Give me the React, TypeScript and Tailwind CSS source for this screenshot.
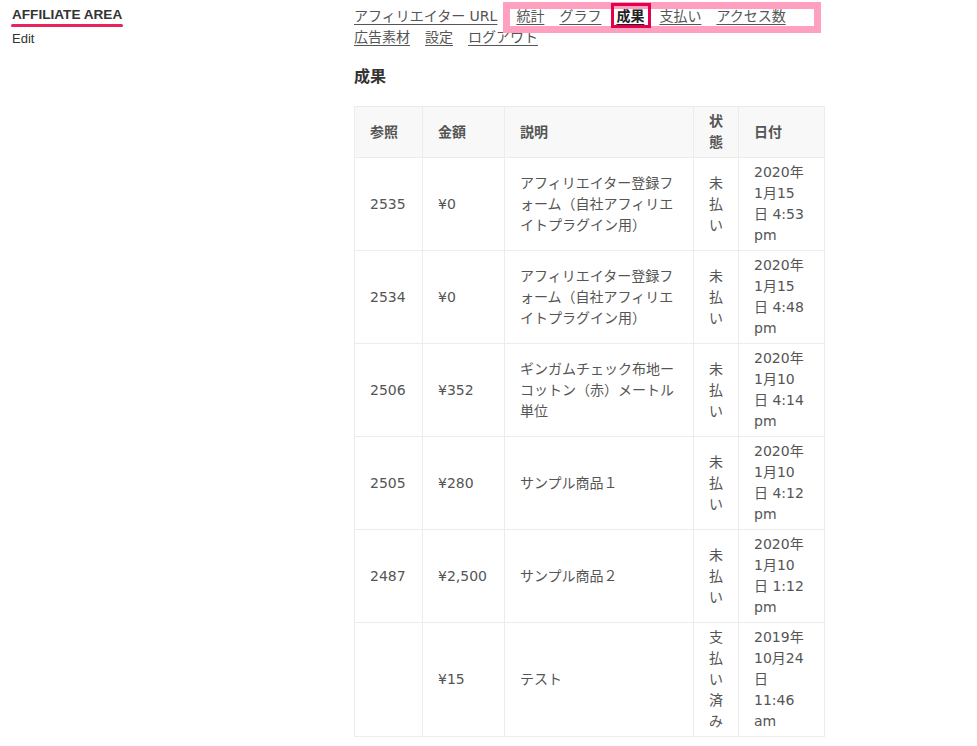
import React from "react";

type Row = {
  ref: string;
  amount: string;
  desc: string;
  status: string;
  date: string[];
};

const rows: Row[] = [
  { ref: "2535", amount: "¥0", desc: "アフィリエイター登録フォーム（自社アフィリエイトプラグイン用）", status: "未払い", date: ["2020年", "1月15", "日 4:53", "pm"] },
  { ref: "2534", amount: "¥0", desc: "アフィリエイター登録フォーム（自社アフィリエイトプラグイン用）", status: "未払い", date: ["2020年", "1月15", "日 4:48", "pm"] },
  { ref: "2506", amount: "¥352", desc: "ギンガムチェック布地ーコットン（赤）メートル単位", status: "未払い", date: ["2020年", "1月10", "日 4:14", "pm"] },
  { ref: "2505", amount: "¥280", desc: "サンプル商品１", status: "未払い", date: ["2020年", "1月10", "日 4:12", "pm"] },
  { ref: "2487", amount: "¥2,500", desc: "サンプル商品２", status: "未払い", date: ["2020年", "1月10", "日 1:12", "pm"] },
  { ref: "", amount: "¥15", desc: "テスト", status: "支払い済み", date: ["2019年", "10月24", "日", "11:46", "am"] },
];

const navLinks = ["アフィリエイター URL", "統計", "グラフ", "成果", "支払い", "アクセス数", "広告素材", "設定", "ログアウト"];

const jp = "font-['DejaVu_Sans','Noto_Sans_CJK_JP',sans-serif]";
const cell = "border border-[#ececec] px-[15px] py-[4px]";

export default function App() {
  return (
    <div className="flex min-h-[746px] w-[977px] bg-white text-[#555]">
      <div className="w-[354px] shrink-0 pl-3 pt-[2px] font-['Liberation_Sans',sans-serif]">
        <div className="inline-block text-[13.6px] font-bold leading-[17px] text-[#333]">
          AFFILIATE AREA
          <div className="-mx-[1px] mt-[1px] h-[3px] rounded-full bg-[#e8245c]" />
        </div>
        <div className="mt-[3px] text-[13px] leading-[18px] text-[#333]">Edit</div>
      </div>

      <div className={`w-[470px] shrink-0 ${jp}`}>
        <nav className="relative mt-[6px] flex flex-wrap text-[14px] leading-[21px]">
          <span className="pointer-events-none absolute left-[149px] top-[-4px] h-[31px] w-[318px] border-[7px] border-[#ffa0c0]" />
          {navLinks.map((l, i) => (
            <a
              key={l}
              href="#"
              className={`${i === 0 ? "mr-[19px]" : "mr-[15px]"} underline underline-offset-[3px] ${
                l === "成果" ? "relative font-bold text-[#222]" : "text-[#555]"
              }`}
            >
              {l}
              {l === "成果" && (
                <span className="pointer-events-none absolute -left-[5px] -right-[7px] -top-[3px] h-[25px] border-[3px] border-[#e6004c]" />
              )}
            </a>
          ))}
        </nav>

        <h2 className="mt-[17px] text-[16px] font-bold leading-[24px] text-[#333]">成果</h2>

        <table className="mt-[17px] w-[470px] table-fixed border-collapse border border-[#ececec] text-[14px] leading-[21px]">
          <colgroup>
            <col className="w-[68px]" />
            <col className="w-[82px]" />
            <col className="w-[189px]" />
            <col className="w-[45px]" />
            <col className="w-[86px]" />
          </colgroup>
          <thead>
            <tr className="bg-[#f8f8f8]">
              {["参照", "金額", "説明", "状態", "日付"].map((h) => (
                <th key={h} className={`${cell} text-left font-bold text-[#555]`}>
                  {h}
                </th>
              ))}
            </tr>
          </thead>
          <tbody>
            {rows.map((r, i) => (
              <tr key={i}>
                <td className={cell}>{r.ref}</td>
                <td className={cell}>{r.amount}</td>
                <td className={cell}>{r.desc}</td>
                <td className={cell}>{r.status}</td>
                <td className={cell}>
                  {r.date.map((d) => (
                    <span key={d} className="block whitespace-nowrap">
                      {d}
                    </span>
                  ))}
                </td>
              </tr>
            ))}
          </tbody>
        </table>
      </div>
    </div>
  );
}
